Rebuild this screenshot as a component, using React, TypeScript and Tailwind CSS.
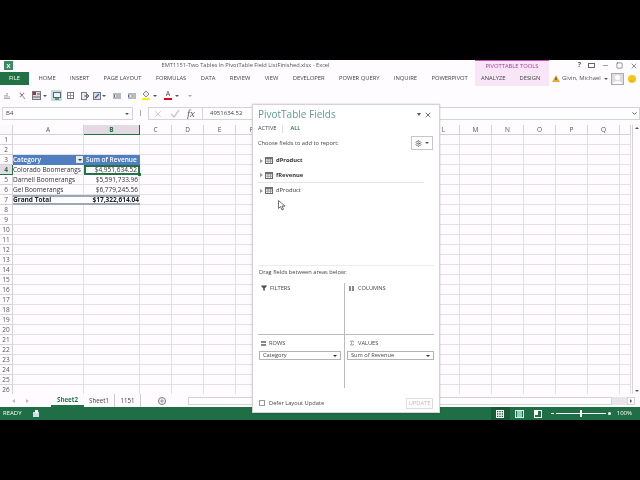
import { ChevronDown, Filter, Minus, Plus, Settings, Sigma, Square, X } from "lucide-react";

const columns = ["A", "B", "C", "D", "E", "F", "G", "H", "I", "J", "K", "L", "M", "N", "O", "P", "Q", ""];
const rows = Array.from({ length: 26 }, (_, i) => i + 1);

const tabs = ["HOME", "INSERT", "PAGE LAYOUT", "FORMULAS", "DATA", "REVIEW", "VIEW", "DEVELOPER", "POWER QUERY", "INQUIRE", "POWERPIVOT"];

// pivot table cells, keyed by row
const pivot: Record<number, [string, string]> = {
  3: ["Category", "Sum of Revenue"],
  4: ["Colorado Boomerangs", "$4,951,634.52"],
  5: ["Darnell Boomerangs", "$5,591,733.96"],
  6: ["Gel Boomerangs", "$6,779,245.56"],
  7: ["Grand Total", "$17,322,614.04"],
};

function Caret({ className = "" }: { className?: string }) {
  return <span className={`inline-block h-0 w-0 border-x-[2px] border-t-[2px] border-x-transparent border-t-[#555] ${className}`} />;
}

function TableIcon() {
  return (
    <svg width="8" height="7" viewBox="0 0 8 7" className="shrink-0">
      <rect x="0.5" y="0.5" width="7" height="6" fill="#fff" stroke="#666" />
      <path d="M0 2h8M3 2v5M5.5 2v5M0 4.2h8" stroke="#777" strokeWidth="0.7" />
      <rect x="0.5" y="0.5" width="7" height="1.5" fill="#777" />
    </svg>
  );
}

function FieldRow({ label, bold, divider }: { label: string; bold?: boolean; divider?: boolean }) {
  return (
    <div className={`flex h-[15px] items-center pl-[2px] ${divider ? "border-b border-[#e6e2e6]" : ""}`}>
      <span className="h-0 w-0 border-y-[2.5px] border-l-[3px] border-y-transparent border-l-[#999]" />
      <span className="ml-[2px] mr-[3px]"><TableIcon /></span>
      <span className={`text-[5.8px] text-[#333] ${bold ? "font-bold" : ""}`}>{label}</span>
    </div>
  );
}

function AreaSelect({ label }: { label: string }) {
  return (
    <div className="flex h-[9px] items-center justify-between border border-[#b5b1b5] bg-white px-[3px] text-[5.7px] text-[#444]">
      <span>{label}</span>
      <span className="h-0 w-0 border-x-[2px] border-t-[2.5px] border-x-transparent border-t-[#333]" />
    </div>
  );
}

function ToolbarIcons() {
  return (
    <div className="flex h-[19px] items-center pl-[4px]">
      <svg width="7" height="8" viewBox="0 0 7 8"><path d="M1 7V3M3 7V1M5 7V4" stroke="#777" strokeWidth="1.2" strokeDasharray="1 0.6" /></svg>
      <svg width="7" height="8" viewBox="0 0 7 8" className="ml-[8px]"><path d="M1 1l5 6M5 1L1 5" stroke="#777" strokeWidth="1.2" strokeDasharray="1 0.6" /></svg>
      <svg width="9" height="9" viewBox="0 0 9 9" className="ml-[6px]"><rect x="0.5" y="0.5" width="8" height="8" fill="#ddd" stroke="#777" /><rect x="1" y="1" width="3" height="3" fill="#a34" /><path d="M5 3h3M1 6h7" stroke="#567" /></svg>
      <Caret className="ml-[2px]" />
      <div className="ml-[4px] flex h-[11px] w-[11px] items-center justify-center bg-[#bfe0d2]">
        <svg width="8" height="8" viewBox="0 0 8 8"><rect x="0.5" y="0.5" width="7" height="5" fill="#eef" stroke="#567" /><path d="M2 7h4" stroke="#276" strokeWidth="1.4" /></svg>
      </div>
      <svg width="7" height="7" viewBox="0 0 7 7" className="ml-[5px]"><rect x="0.5" y="0.5" width="6" height="6" fill="none" stroke="#777" /><path d="M3.5 0v7M0 3.5h7" stroke="#777" strokeWidth="0.7" /></svg>
      <svg width="8" height="8" viewBox="0 0 8 8" className="ml-[7px]"><rect x="0.5" y="0.5" width="5" height="7" fill="#eee" stroke="#777" /><path d="M3 4h5M6 2l2 2-2 2" stroke="#567" fill="none" /></svg>
      <svg width="8" height="8" viewBox="0 0 8 8" className="ml-[4px]"><rect x="0.5" y="0.5" width="7" height="7" fill="#dde" stroke="#777" /><path d="M2 6l4-4" stroke="#36a" strokeWidth="1.4" /></svg>
      <Caret className="ml-[1px]" />
      <svg width="8" height="6" viewBox="0 0 8 6" className="ml-[7px]"><path d="M0 1h8M3 3h5M0 5h8" stroke="#777" /><path d="M2 1.5L0 3l2 1.5" fill="#36a" /></svg>
      <svg width="8" height="6" viewBox="0 0 8 6" className="ml-[7px]"><path d="M0 1h8M3 3h5M0 5h8" stroke="#777" /><path d="M0 1.5L2 3 0 4.5" fill="#36a" /></svg>
      <div className="ml-[6px] flex flex-col items-center">
        <svg width="8" height="6" viewBox="0 0 8 6"><path d="M4 0l3 3-3 3-3-3z" fill="#eee" stroke="#667" strokeWidth="0.8" /></svg>
        <span className="mt-[1px] h-[2px] w-[8px] bg-[#f4f000]" />
      </div>
      <Caret className="ml-[3px]" />
      <div className="ml-[7px] flex flex-col items-center text-[7px] leading-[6px] text-[#444]">
        <span>A</span>
        <span className="mt-[1px] h-[2px] w-[8px] bg-[#e2001a]" />
      </div>
      <Caret className="ml-[3px]" />
      <Caret className="ml-[9px] opacity-50" />
    </div>
  );
}

export default function App() {
  return (
    <div className="flex h-[480px] w-[640px] flex-col overflow-hidden bg-black font-['Open_Sans',sans-serif] text-[#444]">
      <div className="h-[60px] shrink-0" />

      <div className="relative flex h-[360px] flex-col bg-[#fefcfe] blur-[0.3px]">
        {/* title bar + ribbon tabs */}
        <div className="flex h-[26px] shrink-0">
          <div className="flex w-[475px] flex-col">
            <div className="relative flex h-[11px] items-center justify-center pl-[16px] text-[5.7px] text-[#555]">
              <span className="absolute left-[4px] top-[1px] flex h-[9px] w-[9px] items-center justify-center bg-[#3c8a62] text-[6px] font-bold leading-none text-white">X</span>
              EMT1151-Two Tables In PivotTable Field ListFinished.xlsx - Excel
            </div>
            <div className="flex h-[15px] items-center gap-[14.4px] text-[5.8px]">
              <div className="mr-[-5px] flex h-[13px] w-[29px] items-center justify-center bg-[#217346] text-white">FILE</div>
              {tabs.map((t) => (
                <span key={t} className="whitespace-nowrap">{t}</span>
              ))}
            </div>
          </div>
          <div className="flex w-[74px] flex-col border-t border-[#c94fc0] bg-[#f8e6f6]">
            <div className="flex h-[10px] items-center justify-center text-[5.8px] text-[#a03c98]">PIVOTTABLE TOOLS</div>
            <div className="flex h-[15px] items-center gap-[14px] pl-[6px] text-[5.8px]">
              <span>ANALYZE</span>
              <span>DESIGN</span>
            </div>
          </div>
          <div className="flex flex-1 flex-col">
            <div className="flex h-[11px] items-center justify-end gap-[7px] pr-[2px] text-[7px] text-[#555]">
              <span className="font-bold">?</span>
              <span className="h-[5px] w-[7px] border border-[#666]" />
              <Minus size={7} />
              <Square size={7} />
              <X size={8} />
            </div>
            <div className="flex h-[15px] items-center pl-[3px] text-[6px] text-[#555]">
              <svg width="8" height="7" viewBox="0 0 8 7" className="shrink-0"><path d="M4 0l4 7H0z" fill="#e8a93a" /><path d="M4 2.5v2.5" stroke="#333" /></svg>
              <span className="ml-[2px] whitespace-nowrap">Givin, Michael</span>
              <Caret className="ml-[3px]" />
              <div className="ml-[3px] flex h-[12px] w-[13px] shrink-0 items-end justify-center border border-[#aaa] bg-[#ddd]">
                <svg width="9" height="10" viewBox="0 0 9 10"><circle cx="4.5" cy="3.5" r="2.5" fill="#fff" /><path d="M0 10c0-4 9-4 9 0z" fill="#fff" /></svg>
              </div>
              <div className="ml-[4px] flex h-[8px] w-[8px] shrink-0 items-center justify-center rounded-full bg-[#f5c518] text-[5px] leading-none text-[#765]">‿</div>
            </div>
          </div>
        </div>

        <ToolbarIcons />

        {/* formula bar */}
        <div className="flex h-[18px] shrink-0 items-start pt-[2px]">
          <div className="ml-[2px] flex h-[13px] w-[131px] items-center justify-between border border-[#d6d2d6] bg-white pl-[3px] pr-[3px] text-[6px]">
            <span>B4</span>
            <Caret />
          </div>
          <div className="ml-[7px] mt-[3px] h-[6px] w-px bg-[#aaa]" />
          <div className="ml-[7px] flex h-[13px] w-[55px] items-center gap-[7px] border border-[#d6d2d6] pl-[4px] text-[#c9c5c9]">
            <X size={10} />
            <svg width="10" height="9" viewBox="0 0 10 9"><path d="M1 5l3 3 5-7" fill="none" stroke="#c9c5c9" strokeWidth="1.3" /></svg>
            <span className="font-['Liberation_Serif',serif] text-[11px] italic leading-none text-[#666]">fx</span>
          </div>
          <div className="flex h-[13px] flex-1 items-center justify-between border border-l-0 border-[#d6d2d6] bg-white pl-[7px] pr-[1px] text-[6px]">
            <span>4951634.52</span>
            <ChevronDown size={7} strokeWidth={3} />
          </div>
        </div>

        {/* worksheet */}
        <div className="mt-[2px] flex h-[269px] shrink-0 overflow-hidden">
          <div className="grid grid-cols-[13px_71px_56px_repeat(15,32px)_11px] auto-rows-[10px] content-start text-[6.5px] leading-[9px]">
            <div className="border-b border-r border-[#d6d2d6] bg-[#fbf9fb]" />
            {columns.map((c) => (
              <div key={c || "R"} className={`border-r border-b text-center text-[#555] ${c === "B" ? "border-b-[#217346] bg-[#e3dae3] font-bold text-[#217346]" : "border-[#d6d2d6]"}`}>
                {c}
              </div>
            ))}
            {rows.map((r) => (
              <Row key={r} r={r} />
            ))}
          </div>
          <div className="ml-px flex flex-1 flex-col items-center border-l border-[#d6d2d6] pt-[2px]">
            <span className="h-0 w-0 border-x-[2px] border-b-[2px] border-x-transparent border-b-[#555]" />
            <span className="mt-auto mb-[2px] h-0 w-0 border-x-[2px] border-t-[2px] border-x-transparent border-t-[#555]" />
          </div>
        </div>

        {/* sheet tabs */}
        <div className="flex h-[13px] shrink-0 items-center text-[6.2px]">
          <span className="ml-[12px] h-0 w-0 border-y-[2px] border-r-[3px] border-y-transparent border-r-[#bbb]" />
          <span className="ml-[11px] h-0 w-0 border-y-[2px] border-l-[3px] border-y-transparent border-l-[#bbb]" />
          <div className="ml-[22px] flex h-[13px] w-[33px] items-center justify-center border-b-2 border-[#217346] font-bold text-[#217346]">Sheet2</div>
          <div className="flex h-[13px] w-[31px] items-center justify-center border-r border-[#ccc]">Sheet1</div>
          <div className="flex h-[13px] w-[26px] items-center justify-center border-r border-[#ccc]">1151</div>
          <div className="ml-[17px] flex h-[8px] w-[8px] items-center justify-center rounded-full border border-[#777]"><Plus size={6} strokeWidth={2} /></div>
          <div className="ml-auto flex h-[9px] w-[452px] items-center">
            <div className="h-[8px] flex-1 border border-[#d6d2d6] bg-white" />
            <div className="h-[8px] w-[15px] bg-[#e8e4e8]" />
            <div className="flex h-[8px] w-[8px] items-center justify-center border border-[#d6d2d6]">
              <span className="h-0 w-0 border-y-[2px] border-l-[2px] border-y-transparent border-l-[#555]" />
            </div>
            <div className="w-[5px]" />
          </div>
        </div>

        {/* status bar */}
        <div className="flex h-[13px] shrink-0 items-center bg-[#1f6e45] text-[6px] text-white">
          <span className="ml-[3px]">READY</span>
          <svg width="7" height="7" viewBox="0 0 7 7" className="ml-[11px]"><rect x="0" y="2" width="6" height="5" fill="#cde" /><rect x="2" y="0" width="3" height="3" fill="#fff" /></svg>
          <div className="ml-auto flex items-center">
            <div className="flex h-[13px] w-[19px] items-center justify-center bg-[#185a37]">
              <svg width="8" height="8" viewBox="0 0 8 8"><path d="M0 .5h8M0 2.8h8M0 5.2h8M0 7.5h8M.5 0v8M2.8 0v8M5.2 0v8M7.5 0v8" stroke="#fff" /></svg>
            </div>
            <svg width="9" height="8" viewBox="0 0 9 8" className="ml-[5px]"><rect x="0.5" y="0.5" width="8" height="7" fill="none" stroke="#cfe" /><rect x="2" y="1" width="5" height="6" fill="#9cb" /></svg>
            <svg width="8" height="8" viewBox="0 0 8 8" className="ml-[10px]"><rect x="0.5" y="0.5" width="7" height="7" fill="none" stroke="#fff" /><rect x="1" y="1" width="3" height="4" fill="#fff" /></svg>
            <span className="ml-[9px] h-px w-[3px] bg-white" />
            <div className="relative ml-[2px] h-px w-[50px] bg-white">
              <span className="absolute left-[24px] top-[-3px] h-[7px] w-[2px] bg-white" />
            </div>
            <span className="ml-[2px] h-[3px] w-[3px] rounded-full bg-white" />
            <span className="ml-[6px] mr-[8px]">100%</span>
          </div>
        </div>

        {/* task pane floats over the sheet */}
        <div className="absolute left-[252px] top-[44px] flex h-[309px] w-[188px] flex-col border border-[#d6d2d6] bg-white px-[5px] shadow-[0_0_2px_rgba(0,0,0,0.2)]">
          <div className="flex h-[19px] items-center justify-between pr-[2px]">
            <span className="text-[10px] text-[#5f9c8e]">PivotTable Fields</span>
            <div className="flex items-center gap-[3px] text-[#555]">
              <span className="h-0 w-0 border-x-[2.5px] border-t-[3px] border-x-transparent border-t-[#555]" />
              <X size={8} strokeWidth={2.5} />
            </div>
          </div>
          <div className="flex h-[9px] items-center text-[5.7px]">
            <span>ACTIVE</span>
            <span className="ml-[6px] h-[8px] w-px bg-[#ddd]" />
            <span className="ml-[7px] font-semibold text-[#217346]">ALL</span>
          </div>
          <div className="mt-[3px] flex h-[14px] items-center justify-between pr-[1px] text-[5.7px]">
            <span>Choose fields to add to report:</span>
            <div className="flex h-[14px] w-[22px] items-center justify-center gap-[3px] border border-[#c9c5c9]">
              <Settings size={7} />
              <Caret />
            </div>
          </div>
          <div className="mt-[3px] w-[166px]">
            <FieldRow label="dProduct" bold />
            <FieldRow label="fRevenue" bold divider />
            <FieldRow label="dProduct" />
          </div>
          <svg width="8" height="11" viewBox="0 0 8 11" className="absolute left-[25px] top-[95px]">
            <path d="M0.5 0.5v8l2-2 1.5 3.5 1.5-.7-1.5-3.2h3z" fill="#fff" stroke="#333" strokeWidth="0.7" />
          </svg>

          <div className="mt-auto border-t border-[#eeeaee] pt-[1px]">
            <div className="ml-[1px] mb-[6px] h-[10px] text-[5.7px] leading-[10px]">Drag fields between areas below:</div>
            <div className="grid grid-cols-[87px_1fr] grid-rows-[52px_53px]">
              <div className="border-b border-r border-[#bbb]">
                <div className="mt-[1px] flex items-center gap-[3px] pl-[3px] text-[5.7px]"><Filter size={6} fill="#555" />FILTERS</div>
              </div>
              <div className="border-b border-[#bbb]">
                <div className="mt-[1px] flex items-center gap-[4px] pl-[4px] text-[5.7px]">
                  <span className="h-[5px] w-[5px] border-x-2 border-[#888]" />COLUMNS
                </div>
              </div>
              <div className="border-r border-[#bbb] pr-[3px] pl-[1px]">
                <div className="mb-[3px] mt-[3px] flex h-[10px] items-center gap-[3px] pl-[2px] text-[5.7px]">
                  <span className="h-[5px] w-[5px] border-y-2 border-[#888]" />ROWS
                </div>
                <AreaSelect label="Category" />
              </div>
              <div className="pl-[2px]">
                <div className="mb-[3px] mt-[3px] flex h-[10px] items-center gap-[3px] pl-[2px] text-[5.7px]"><Sigma size={6} />VALUES</div>
                <AreaSelect label="Sum of Revenue" />
              </div>
            </div>
          </div>
          <div className="mb-[3px] mt-[10px] flex h-[11px] items-center justify-between pr-[1px] text-[5.7px]">
            <div className="flex items-center gap-[4px] pl-[1px]">
              <span className="h-[6px] w-[6px] border border-[#999]" />
              Defer Layout Update
            </div>
            <div className="flex h-[11px] w-[27px] items-center justify-center border border-[#ddd] text-[#bbb]">UPDATE</div>
          </div>
        </div>
      </div>

      <div className="flex-1" />
    </div>
  );
}

function Row({ r }: { r: number }) {
  const data = pivot[r];
  const isHeader = r === 3;
  const isTotal = r === 7;
  const line = "border-b border-r border-[#e4e0e4]";
  const pivotStyle = isHeader
    ? "bg-[#4f7fc0] font-semibold text-white"
    : isTotal
      ? "font-bold text-[#222] border-y-2 border-y-[#9aa8b8] leading-[6px]"
      : "text-[#333] border-b border-r border-[#e4e0e4]";
  return (
    <>
      <div className={`border-b border-r text-center ${r === 4 ? "border-r-[#217346] bg-[#e3dae3] font-bold text-[#217346]" : "border-[#d6d2d6] text-[#555]"}`}>{r}</div>
      {columns.map((c) => {
        if (data && c === "A") {
          return (
            <div key={c} className={`relative overflow-hidden whitespace-nowrap ${pivotStyle}`}>
              {data[0]}
              {isHeader && (
                <span className="absolute right-[1px] top-[1px] flex h-[7px] w-[7px] items-center justify-center bg-[#e8e8e8]">
                  <span className="h-0 w-0 border-x-[2px] border-t-[2px] border-x-transparent border-t-[#333]" />
                </span>
              )}
            </div>
          );
        }
        if (data && c === "B") {
          if (r === 4) {
            return (
              <div key={c} className="relative whitespace-nowrap border-2 border-[#217346] pr-[1px] text-right leading-[6px] text-[#333]">
                {data[1]}
                <span className="absolute bottom-[-3px] right-[-3px] h-[3px] w-[3px] bg-[#217346]" />
              </div>
            );
          }
          return (
            <div key={c} className={`whitespace-nowrap pr-[1px] ${isHeader ? "pl-[2px] text-left" : "text-right"} ${pivotStyle}`}>
              {data[1]}
            </div>
          );
        }
        return <div key={c || "R"} className={line} />;
      })}
    </>
  );
}
